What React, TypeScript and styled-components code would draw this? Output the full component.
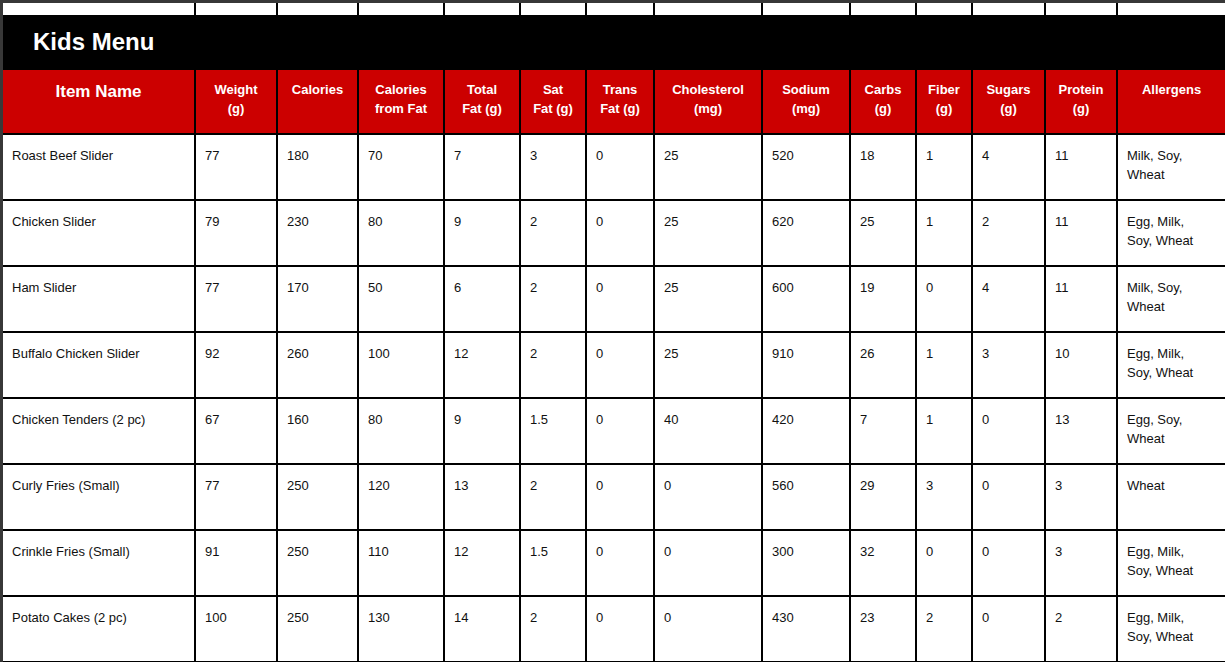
import React from 'react';
import styled, { createGlobalStyle } from 'styled-components';

const COLUMNS = [191, 80, 79, 84, 74, 64, 66, 106, 86, 64, 54, 71, 70, 107];
const TRACKS = COLUMNS.map((w) => `${w}px`).join(' ');

const GlobalStyle = createGlobalStyle`
    html, body {
        margin: 0;
        padding: 0;
        background: #383838;
        overflow: hidden;
    }
    body {
        font-family: "Liberation Sans", Arial, sans-serif;
    }
`;

const Frame = styled.div`
    padding: 3px 0 0 3px;
    width: 1225px;
    height: 662px;
    box-sizing: border-box;
    overflow: hidden;
`;

const Sheet = styled.div`
    display: flex;
    flex-direction: column;
    width: max-content;
    background: #fff;
`;

const StubRow = styled.div`
    display: grid;
    grid-template-columns: ${TRACKS};
    column-gap: 2px;
    background: #000;
    height: 12px;
`;

const StubCell = styled.div`
    background: #fff;
`;

const Banner = styled.div`
    display: flex;
    align-items: center;
    height: 55px;
    padding: 0 0 1px 30px;
    box-sizing: border-box;
    background: #000;
    color: #fff;
    font-size: 24px;
    font-weight: bold;
`;

const Table = styled.div`
    display: grid;
    grid-template-columns: ${TRACKS};
    grid-auto-rows: 64px;
    grid-template-rows: 63px;
    gap: 2px;
    padding-bottom: 2px;
    background: #000;
`;

const HeadCell = styled.div<{ $big?: boolean }>`
    background: #cc0000;
    color: #fff;
    font-weight: bold;
    text-align: center;
    font-size: ${(p) => (p.$big ? '17px' : '13px')};
    line-height: ${(p) => (p.$big ? '22px' : '19px')};
    padding: ${(p) => (p.$big ? '11px' : '10px')} 4px 0;
`;

const Cell = styled.div<{ $wrapAt?: number }>`
    background: #fff;
    color: #111;
    font-size: 13px;
    line-height: 19px;
    padding: 11px 9px 0 9px;
    ${(p) => (p.$wrapAt ? `padding-right: ${p.$wrapAt}px;` : '')}
`;

const HEADERS: string[][] = [
    ['Item Name'],
    ['Weight', '(g)'],
    ['Calories'],
    ['Calories', 'from Fat'],
    ['Total', 'Fat (g)'],
    ['Sat', 'Fat (g)'],
    ['Trans', 'Fat (g)'],
    ['Cholesterol', '(mg)'],
    ['Sodium', '(mg)'],
    ['Carbs', '(g)'],
    ['Fiber', '(g)'],
    ['Sugars', '(g)'],
    ['Protein', '(g)'],
    ['Allergens'],
];

const ITEMS: string[][] = [
    ['Roast Beef Slider', '77', '180', '70', '7', '3', '0', '25', '520', '18', '1', '4', '11', 'Milk, Soy, Wheat'],
    ['Chicken Slider', '79', '230', '80', '9', '2', '0', '25', '620', '25', '1', '2', '11', 'Egg, Milk, Soy, Wheat'],
    ['Ham Slider', '77', '170', '50', '6', '2', '0', '25', '600', '19', '0', '4', '11', 'Milk, Soy, Wheat'],
    ['Buffalo Chicken Slider', '92', '260', '100', '12', '2', '0', '25', '910', '26', '1', '3', '10', 'Egg, Milk, Soy, Wheat'],
    ['Chicken Tenders (2 pc)', '67', '160', '80', '9', '1.5', '0', '40', '420', '7', '1', '0', '13', 'Egg, Soy, Wheat'],
    ['Curly Fries (Small)', '77', '250', '120', '13', '2', '0', '0', '560', '29', '3', '0', '3', 'Wheat'],
    ['Crinkle Fries (Small)', '91', '250', '110', '12', '1.5', '0', '0', '300', '32', '0', '0', '3', 'Egg, Milk, Soy, Wheat'],
    ['Potato Cakes (2 pc)', '100', '250', '130', '14', '2', '0', '0', '430', '23', '2', '0', '2', 'Egg, Milk, Soy, Wheat'],
];

export default function App() {
    return (
        <>
            <GlobalStyle />
            <Frame>
                <Sheet>
                    <StubRow>
                        {COLUMNS.map((_, i) => (
                            <StubCell key={i} />
                        ))}
                    </StubRow>
                    <Banner>Kids Menu</Banner>
                    <Table>
                        {HEADERS.map((lines, i) => (
                            <HeadCell key={i} $big={i === 0}>
                                {lines.map((line, j) => (
                                    <React.Fragment key={j}>
                                        {j > 0 && <br />}
                                        {line}
                                    </React.Fragment>
                                ))}
                            </HeadCell>
                        ))}
                        {ITEMS.map((row, r) =>
                            row.map((value, c) => (
                                <Cell key={`${r}-${c}`} $wrapAt={c === row.length - 1 ? 24 : undefined}>
                                    {value}
                                </Cell>
                            ))
                        )}
                    </Table>
                </Sheet>
            </Frame>
        </>
    );
}
